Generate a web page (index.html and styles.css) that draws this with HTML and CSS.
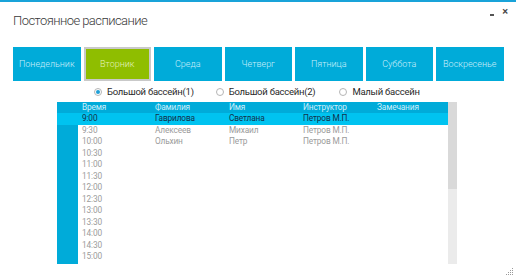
FILE: index.html
```html
<!DOCTYPE html>
<html>
<head>
<meta charset="utf-8">
<link rel="stylesheet" href="styles.css">
</head>
<body>
<div class="window">
  <div class="topline"></div>
  <div class="titlebar">
    <div class="title">Постоянное расписание</div>
    <div class="controls"><span class="min"></span><span class="close">×</span></div>
  </div>
  <div class="days">
    <div class="day">Понедельник</div>
    <div class="day active">Вторник</div>
    <div class="day">Среда</div>
    <div class="day">Четверг</div>
    <div class="day">Пятница</div>
    <div class="day">Суббота</div>
    <div class="day">Воскресенье</div>
  </div>
  <div class="radios">
    <label class="radio"><span class="dot on"></span>Большой бассейн(1)</label>
    <label class="radio"><span class="dot"></span>Большой бассейн(2)</label>
    <label class="radio"><span class="dot"></span>Малый бассейн</label>
  </div>
  <div class="tablewrap">
    <div class="table">
      <div class="row head"><div class="rh"></div><div>Время</div><div>Фамилия</div><div>Имя</div><div>Инструктор</div><div>Замечания</div></div>
      <div class="body">
        <div class="row sel"><div class="rh"></div><div>9:00</div><div>Гаврилова</div><div>Светлана</div><div>Петров М.П.</div><div></div></div>
        <div class="row"><div class="rh"></div><div>9:30</div><div>Алексеев</div><div>Михаил</div><div>Петров М.П.</div><div></div></div>
        <div class="row"><div class="rh"></div><div>10:00</div><div>Ольхин</div><div>Петр</div><div>Петров М.П.</div><div></div></div>
        <div class="row"><div class="rh"></div><div>10:30</div><div></div><div></div><div></div><div></div></div>
        <div class="row"><div class="rh"></div><div>11:00</div><div></div><div></div><div></div><div></div></div>
        <div class="row"><div class="rh"></div><div>11:30</div><div></div><div></div><div></div><div></div></div>
        <div class="row"><div class="rh"></div><div>12:00</div><div></div><div></div><div></div><div></div></div>
        <div class="row"><div class="rh"></div><div>12:30</div><div></div><div></div><div></div><div></div></div>
        <div class="row"><div class="rh"></div><div>13:00</div><div></div><div></div><div></div><div></div></div>
        <div class="row"><div class="rh"></div><div>13:30</div><div></div><div></div><div></div><div></div></div>
        <div class="row"><div class="rh"></div><div>14:00</div><div></div><div></div><div></div><div></div></div>
        <div class="row"><div class="rh"></div><div>14:30</div><div></div><div></div><div></div><div></div></div>
        <div class="row"><div class="rh"></div><div>15:00</div><div></div><div></div><div></div><div></div></div>
        <div class="row"><div class="rh"></div><div></div><div></div><div></div><div></div><div></div></div>
      </div>
    </div>
    <div class="scroll"><div class="thumb"></div></div>
  </div>
  <div class="grip">
    <svg width="8" height="8" viewBox="0 0 8 8"><g fill="#9a9a9a"><rect x="6" y="0" width="1" height="1"/><rect x="4" y="2" width="1" height="1"/><rect x="6" y="2" width="1" height="1"/><rect x="2" y="4" width="1" height="1"/><rect x="4" y="4" width="1" height="1"/><rect x="6" y="4" width="1" height="1"/><rect x="0" y="6" width="1" height="1"/><rect x="2" y="6" width="1" height="1"/><rect x="4" y="6" width="1" height="1"/><rect x="6" y="6" width="1" height="1"/></g></svg>
  </div>
</div>
</body>
</html>
```
FILE: styles.css
```css
html, body {
  margin: 0;
  padding: 0;
  background: #ffffff;
}
body {
  font-family: Roboto, "Noto Sans", sans-serif;
  width: 516px;
  height: 278px;
  overflow: hidden;
}
.window {
  position: relative;
  width: 516px;
  height: 278px;
}
.topline {
  height: 2px;
  background: #19a3d9;
}
.titlebar {
  display: flex;
  justify-content: space-between;
  align-items: flex-start;
  height: 45px;
}
.title {
  margin: 11px 0 0 13px;
  font-size: 13px;
  letter-spacing: -0.55px;
  line-height: 16px;
  color: #3a3a3a;
  font-weight: 300;
}
.controls {
  display: flex;
  align-items: center;
  gap: 8px;
  margin: 4px 8px 0 0;
  height: 12px;
}
.min {
  display: block;
  width: 4px;
  height: 2px;
  background: #555;
  margin-top: 6px;
}
.close {
  font-size: 11px;
  line-height: 12px;
  color: #444;
  font-weight: 500;
}
.days {
  display: flex;
  gap: 3px;
  padding-left: 13px;
  height: 34px;
}
.day {
  width: 67.5px;
  box-sizing: border-box;
  background: #00abd9;
  color: #c9eefa;
  font-size: 9px;
  font-weight: 300;
  display: flex;
  align-items: center;
  justify-content: center;
}
.day.active {
  background: #8fbe00;
  border: 2px solid #c9c9c9;
  color: #e2f2b8;
}
.radios {
  display: flex;
  height: 21px;
  align-items: center;
  padding-left: 94px;
  font-size: 9.5px;
  letter-spacing: -0.25px;
  color: #2a2a2a;
}
.radio {
  display: flex;
  align-items: center;
  margin-right: 22px;
}
.radio:nth-child(2) {
  margin-right: 24px;
}
.dot {
  width: 6px;
  height: 6px;
  border: 1px solid #b5b5b5;
  border-radius: 50%;
  margin-right: 5px;
  box-sizing: content-box;
  position: relative;
}
.dot.on::after {
  content: "";
  position: absolute;
  left: 1px;
  top: 1px;
  width: 4px;
  height: 4px;
  border-radius: 50%;
  background: #1f9fd6;
}
.tablewrap {
  display: flex;
  margin-left: 57px;
  height: 162px;
}
.table {
  width: 391px;
  display: flex;
  flex-direction: column;
  overflow: hidden;
}
.row {
  display: grid;
  grid-template-columns: 21px 73px 74px 74px 74px 1fr;
  height: 11.5px;
  font-size: 8.3px;
  letter-spacing: -0.15px;
  line-height: 11.5px;
  color: #9b9b9b;
}
.row > div {
  padding-left: 4px;
  white-space: nowrap;
  overflow: hidden;
}
.row .rh {
  background: #00abd9;
  padding: 0;
}
.row.head {
  height: 11px;
  line-height: 11px;
  background: #00abd9;
  color: #cdeefb;
}
.row.sel {
  background: #00c3f0;
  color: #14304a;
}
.row.sel .rh {
  background: #00c3f0;
}
.body {
  flex: 1;
  overflow: hidden;
  display: flex;
  flex-direction: column;
}
.scroll {
  width: 9px;
  background: #ebebeb;
}
.thumb {
  height: 87px;
  background: #d9d9d9;
}
.grip {
  position: absolute;
  right: 2px;
  bottom: 2px;
  width: 8px;
  height: 8px;
  line-height: 0;
}
```
